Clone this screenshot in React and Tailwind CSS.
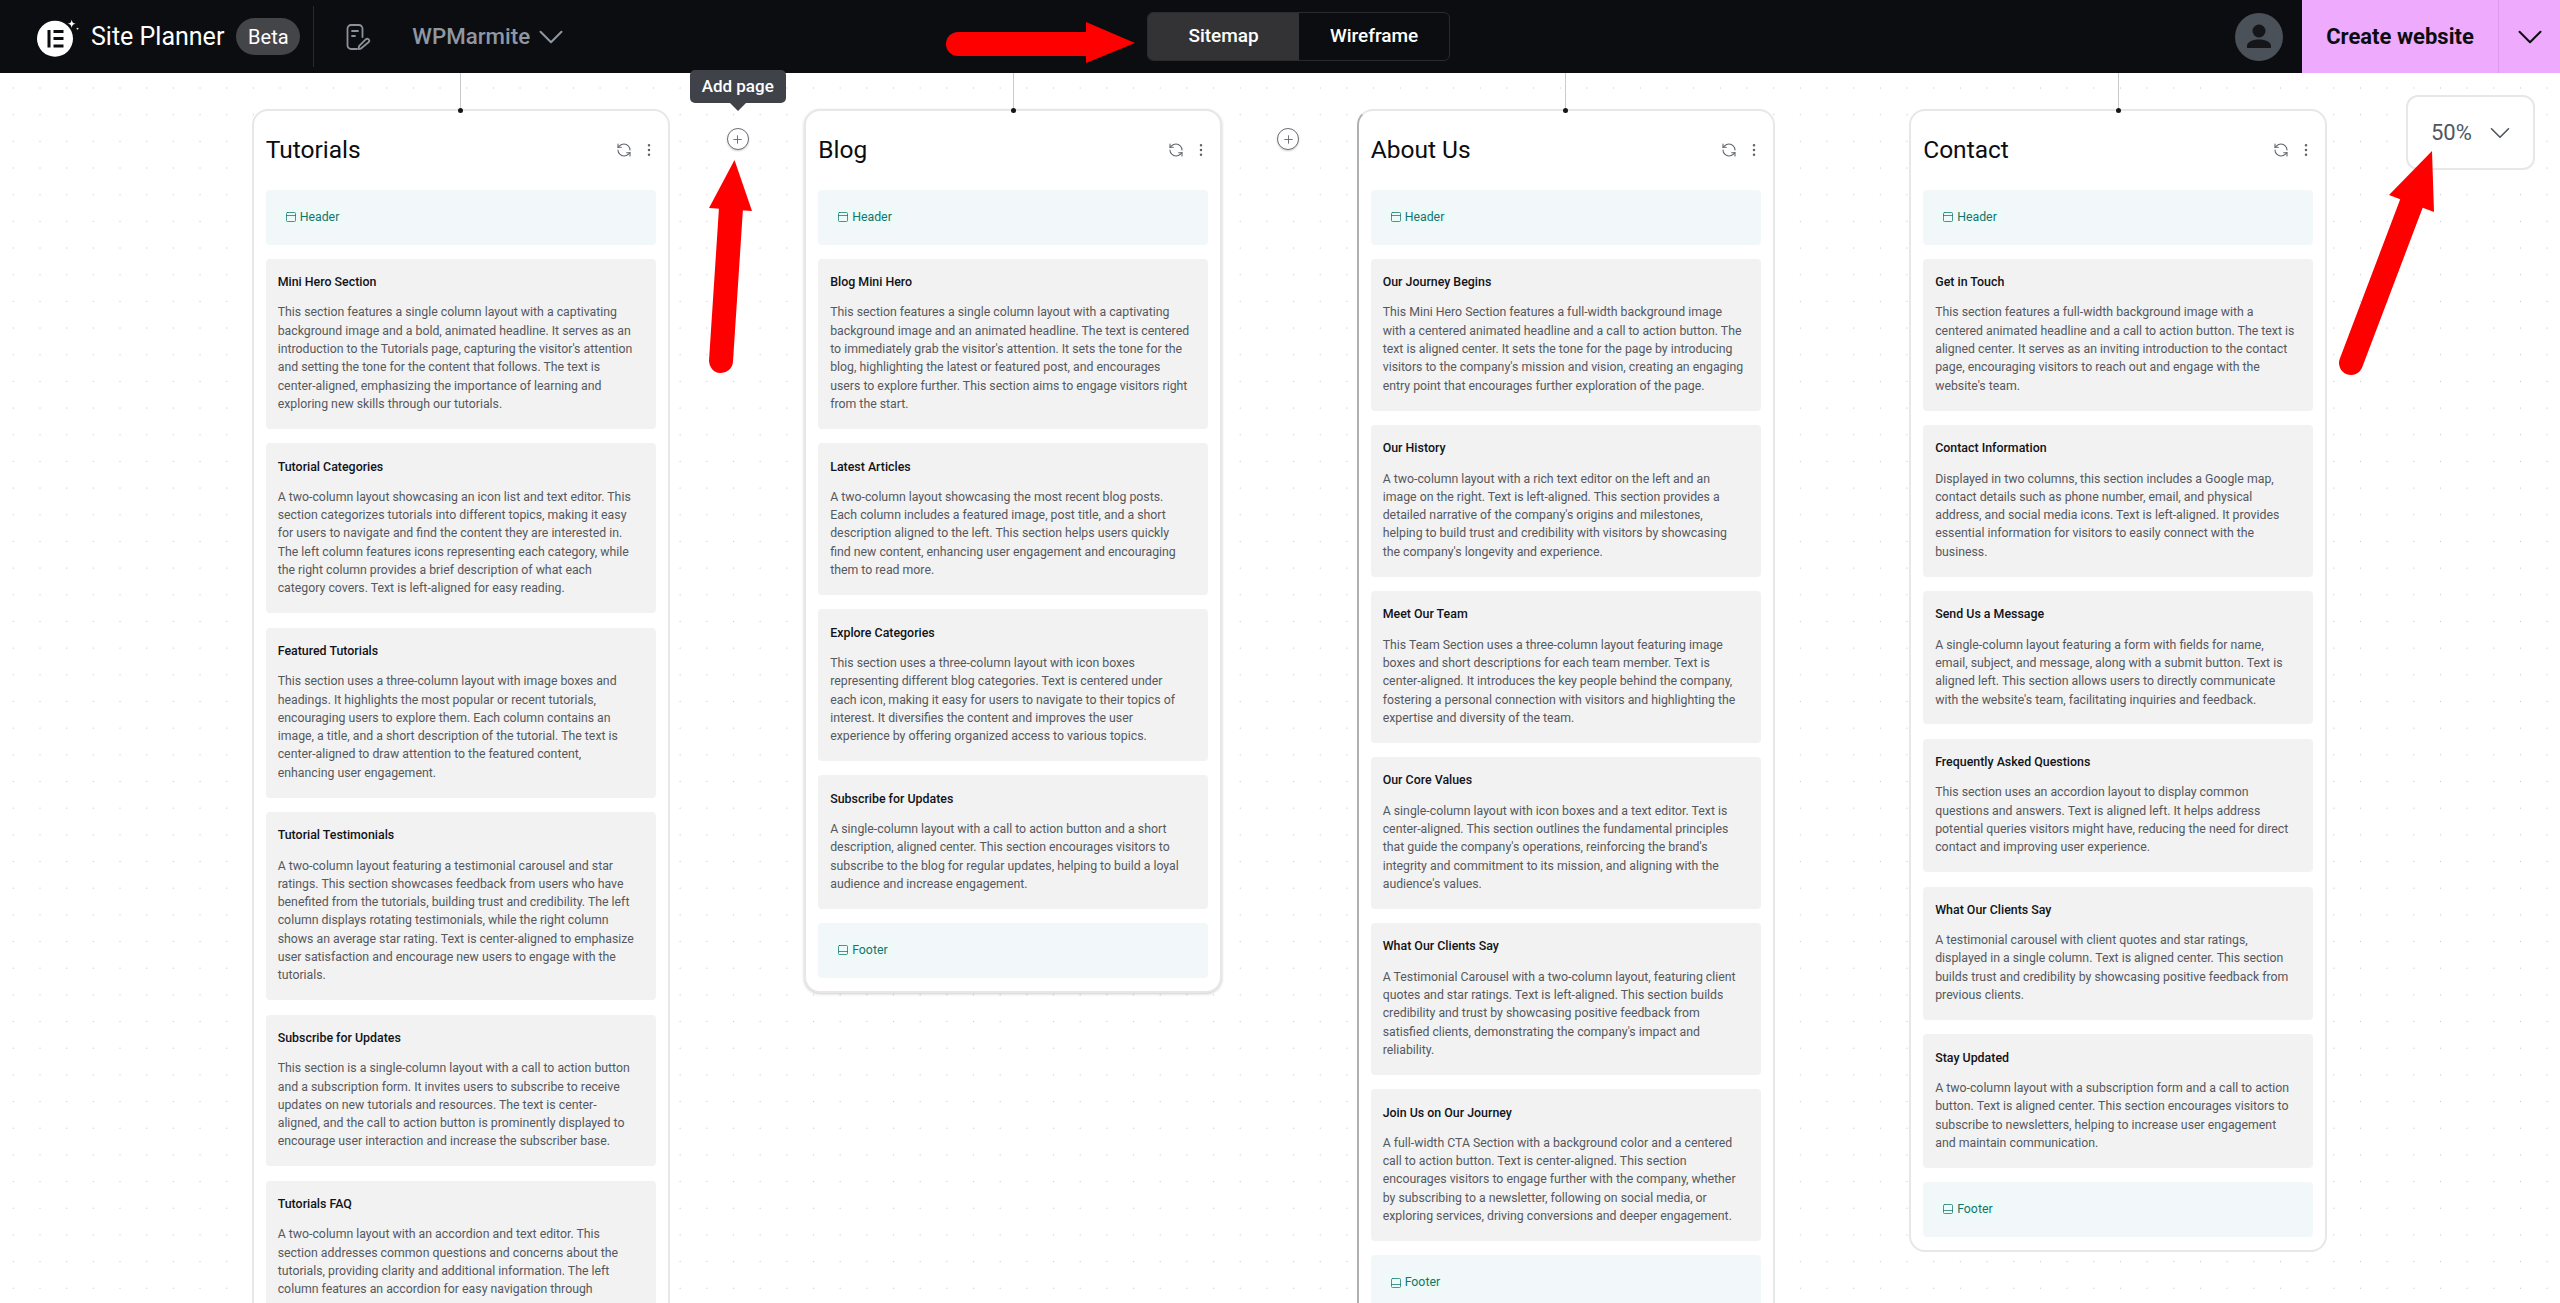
import React from "react";
import { ChevronDown, EllipsisVertical, PanelBottom, PanelTop, Plus, RefreshCcw } from "lucide-react";

const pages = [
  {
    title: "Tutorials",
    footer: false,
    sections: [
      ["Mini Hero Section", "This section features a single column layout with a captivating background image and a bold, animated headline. It serves as an introduction to the Tutorials page, capturing the visitor's attention and setting the tone for the content that follows. The text is center-aligned, emphasizing the importance of learning and exploring new skills through our tutorials."],
      ["Tutorial Categories", "A two-column layout showcasing an icon list and text editor. This section categorizes tutorials into different topics, making it easy for users to navigate and find the content they are interested in. The left column features icons representing each category, while the right column provides a brief description of what each category covers. Text is left-aligned for easy reading."],
      ["Featured Tutorials", "This section uses a three-column layout with image boxes and headings. It highlights the most popular or recent tutorials, encouraging users to explore them. Each column contains an image, a title, and a short description of the tutorial. The text is center-aligned to draw attention to the featured content, enhancing user engagement."],
      ["Tutorial Testimonials", "A two-column layout featuring a testimonial carousel and star ratings. This section showcases feedback from users who have benefited from the tutorials, building trust and credibility. The left column displays rotating testimonials, while the right column shows an average star rating. Text is center-aligned to emphasize user satisfaction and encourage new users to engage with the tutorials."],
      ["Subscribe for Updates", "This section is a single-column layout with a call to action button and a subscription form. It invites users to subscribe to receive updates on new tutorials and resources. The text is center-aligned, and the call to action button is prominently displayed to encourage user interaction and increase the subscriber base."],
      ["Tutorials FAQ", "A two-column layout with an accordion and text editor. This section addresses common questions and concerns about the tutorials, providing clarity and additional information. The left column features an accordion for easy navigation through"],
    ],
  },
  {
    title: "Blog",
    footer: true,
    sections: [
      ["Blog Mini Hero", "This section features a single column layout with a captivating background image and an animated headline. The text is centered to immediately grab the visitor's attention. It sets the tone for the blog, highlighting the latest or featured post, and encourages users to explore further. This section aims to engage visitors right from the start."],
      ["Latest Articles", "A two-column layout showcasing the most recent blog posts. Each column includes a featured image, post title, and a short description aligned to the left. This section helps users quickly find new content, enhancing user engagement and encouraging them to read more."],
      ["Explore Categories", "This section uses a three-column layout with icon boxes representing different blog categories. Text is centered under each icon, making it easy for users to navigate to their topics of interest. It diversifies the content and improves the user experience by offering organized access to various topics."],
      ["Subscribe for Updates", "A single-column layout with a call to action button and a short description, aligned center. This section encourages visitors to subscribe to the blog for regular updates, helping to build a loyal audience and increase engagement."],
    ],
  },
  {
    title: "About Us",
    footer: true,
    sections: [
      ["Our Journey Begins", "This Mini Hero Section features a full-width background image with a centered animated headline and a call to action button. The text is aligned center. It sets the tone for the page by introducing visitors to the company's mission and vision, creating an engaging entry point that encourages further exploration of the page."],
      ["Our History", "A two-column layout with a rich text editor on the left and an image on the right. Text is left-aligned. This section provides a detailed narrative of the company's origins and milestones, helping to build trust and credibility with visitors by showcasing the company's longevity and experience."],
      ["Meet Our Team", "This Team Section uses a three-column layout featuring image boxes and short descriptions for each team member. Text is center-aligned. It introduces the key people behind the company, fostering a personal connection with visitors and highlighting the expertise and diversity of the team."],
      ["Our Core Values", "A single-column layout with icon boxes and a text editor. Text is center-aligned. This section outlines the fundamental principles that guide the company's operations, reinforcing the brand's integrity and commitment to its mission, and aligning with the audience's values."],
      ["What Our Clients Say", "A Testimonial Carousel with a two-column layout, featuring client quotes and star ratings. Text is left-aligned. This section builds credibility and trust by showcasing positive feedback from satisfied clients, demonstrating the company's impact and reliability."],
      ["Join Us on Our Journey", "A full-width CTA Section with a background color and a centered call to action button. Text is center-aligned. This section encourages visitors to engage further with the company, whether by subscribing to a newsletter, following on social media, or exploring services, driving conversions and deeper engagement."],
    ],
  },
  {
    title: "Contact",
    footer: true,
    sections: [
      ["Get in Touch", "This section features a full-width background image with a centered animated headline and a call to action button. The text is aligned center. It serves as an inviting introduction to the contact page, encouraging visitors to reach out and engage with the website's team."],
      ["Contact Information", "Displayed in two columns, this section includes a Google map, contact details such as phone number, email, and physical address, and social media icons. Text is left-aligned. It provides essential information for visitors to easily connect with the business."],
      ["Send Us a Message", "A single-column layout featuring a form with fields for name, email, subject, and message, along with a submit button. Text is aligned left. This section allows users to directly communicate with the website's team, facilitating inquiries and feedback."],
      ["Frequently Asked Questions", "This section uses an accordion layout to display common questions and answers. Text is aligned left. It helps address potential queries visitors might have, reducing the need for direct contact and improving user experience."],
      ["What Our Clients Say", "A testimonial carousel with client quotes and star ratings, displayed in a single column. Text is aligned center. This section builds trust and credibility by showcasing positive feedback from previous clients."],
      ["Stay Updated", "A two-column layout with a subscription form and a call to action button. Text is aligned center. This section encourages visitors to subscribe to newsletters, helping to increase user engagement and maintain communication."],
    ],
  },
];

const ElementorLogo = () => (
  <svg width="46" height="46" viewBox="0 0 46 46" className="shrink-0">
    <circle cx="18" cy="24.7" r="18" fill="#fff" />
    <rect x="10.5" y="16" width="3" height="17.5" fill="#0c0d10" />
    <rect x="16.5" y="16" width="10" height="3" fill="#0c0d10" />
    <rect x="16.5" y="23" width="10" height="3" fill="#0c0d10" />
    <rect x="16.5" y="30.5" width="10" height="3" fill="#0c0d10" />
    <path d="M34.7 5.5c.5 3 1.2 3.700 4 4.300-2.800.6-3.500 1.300-4 4.200-.5-2.900-1.200-3.600-4-4.200 2.800-.6 3.500-1.300 4-4.300z" fill="#fff" />
    <path d="M40.500 13.200c.2 1 .5 1.300 1.500 1.500-1 .2-1.300.5-1.500 1.500-.2-1-.5-1.300-1.500-1.500 1-.2 1.300-.5 1.500-1.500z" fill="#fff" />
  </svg>
);

const PlanIcon = () => (
  <svg width="26" height="26" viewBox="0 0 26 26" fill="none" stroke="#8b929b" strokeWidth="1.8" strokeLinecap="round" strokeLinejoin="round" className="shrink-0">
    <path d="M11 25H5a3.500 3.500 0 0 1-3.500-3.500v-17A3.500 3.500 0 0 1 5 1h8a3.500 3.500 0 0 1 3.500 3.500V13" />
    <path d="M6 7h6M6 12h3" />
    <path d="M15 24.500l-2.500.5.500-2.800 7-7a2 2 0 0 1 2.800 2.800z" />
  </svg>
);

const AvatarIcon = () => (
  <svg width="48" height="48" viewBox="0 0 48 48" className="shrink-0">
    <circle cx="24" cy="24" r="24" fill="#4b5158" />
    <circle cx="24" cy="18" r="6.500" fill="#14161a" />
    <path d="M12 35v-2c0-4 5.500-6.500 12-6.500S36 29 36 33v2z" fill="#14161a" />
  </svg>
);

const Tag = ({ kind }) => {
  const Icon = kind === "Header" ? PanelTop : PanelBottom;
  return (
    <div className="flex items-center h-[54.6px] px-3 rounded-[4px] bg-[#f2f8fa]">
      <span className="flex items-center gap-[3px] h-[18px] px-[7px] rounded-full bg-[#eefaf8] text-[12.3px] text-[#0f766e]">
        <Icon size={12} strokeWidth={1.5} />
        {kind}
      </span>
    </div>
  );
};

const Section = ({ title, text }) => (
  <div className="rounded-[4px] bg-[#f2f2f2] pl-3 pr-[17px] pt-[15.3px] pb-[15.7px]">
    <h3 className="text-[12.4px] leading-[16.3px] font-medium text-[#111318] mb-[13px]">{title}</h3>
    <p className="text-[12.3px] leading-[18.3px] text-[#55585d]">{text}</p>
  </div>
);

const PageCard = ({ page }) => (
  <div className="flex flex-col items-center w-[418px] shrink-0">
    <div className="w-px h-[36px] bg-[#c9cacc]" />
    <div className={`relative w-full rounded-[16px] bg-white border-[#e7e7e7] border-2 px-[12px] pt-[25px] pb-[13px] ${page.title === "About Us" ? "border-l-[#b0b0b0]" : ""} ${page.title === "Blog" ? "shadow-[0_1px_3px_rgba(0,0,0,0.2)]" : ""}`}>
      <span className="absolute -top-[3px] left-1/2 -ml-[2.500px] w-[5px] h-[5px] rounded-full bg-[#14161a]" />
      <div className="flex items-center justify-between h-[28px] mb-[26px]">
        <h2 className="text-[24.5px] leading-[28px] text-[#0c0d10]">{page.title}</h2>
        <div className="flex items-center gap-[12px] pr-[2px] text-[#5f646b]">
          <RefreshCcw size={16} strokeWidth={1.6} />
          <EllipsisVertical size={16} strokeWidth={1.8} className="-mx-[3px]" />
        </div>
      </div>
      <div className="flex flex-col gap-[14.3px]">
        <Tag kind="Header" />
        {page.sections.map(([title, text]) => (
          <Section key={title} title={title} text={text} />
        ))}
        {page.footer && <Tag kind="Footer" />}
      </div>
    </div>
  </div>
);

const AddPage = ({ tooltip }) => (
  <div className={`relative flex justify-center w-[134.500px] shrink-0 pt-[55px] ${tooltip ? "pl-[2px]" : "pr-[2px]"}`}>
    <button className="flex items-center justify-center w-[22px] h-[22px] rounded-full bg-white border-[1.5px] border-[#6b6f75] text-[#5b6067] shadow-[0_1px_2px_rgba(0,0,0,0.2)]">
      <Plus size={13} strokeWidth={1.6} />
    </button>
    {tooltip && (
      <div className="absolute top-[-3px] left-[68px] -translate-x-1/2 flex flex-col items-center">
        <div className="flex items-center justify-center w-[96px] h-[33px] rounded-[5px] bg-[#3f4349] text-[17px] font-medium text-white whitespace-nowrap">
          Add page
        </div>
        <div className="w-0 h-0 border-x-[8px] border-x-transparent border-t-[8px] border-t-[#3f4349]" />
      </div>
    )}
  </div>
);

const Arrows = () => (
  <svg className="absolute inset-0 pointer-events-none" width="2560" height="1303" viewBox="0 0 2560 1303" fill="#ff0000">
    <g stroke="#ff0000" strokeWidth="24" strokeLinecap="round" fill="none">
      <path d="M958 44H1090" />
      <path d="M721 361L731 208" />
      <path d="M2351 363L2412 202" />
    </g>
    <path d="M1086 22L1135 43L1086 63z" />
    <path d="M734.500 160L752 211L709 208z" />
    <path d="M2432 151L2434 212L2389 195z" />
  </svg>
);

export default function App() {
  return (
    <div className="relative h-[1303px] overflow-hidden bg-white font-['Roboto',sans-serif]">
      <header className="flex items-center h-[73px] bg-[#0c0d10]">
        <div className="flex items-center pl-[37px] h-full">
          <ElementorLogo />
          <span className="ml-[8px] text-[25px] text-white whitespace-nowrap">Site Planner</span>
          <span className="flex items-center justify-center ml-[12px] w-[64px] h-[37px] rounded-full bg-[#444548] text-[20px] text-white">Beta</span>
          <div className="ml-[13px] w-px h-[61px] bg-[#2a2b2e]" />
          <div className="ml-[32px]"><PlanIcon /></div>
          <span className="ml-[40px] text-[22.3px] font-medium text-[#8f98a2] whitespace-nowrap">WPMarmite</span>
          <ChevronDown size={42} strokeWidth={1.15} className="text-[#8f98a2]" />
        </div>
        <div className="flex ml-[575px] w-[303px] h-[49px] rounded-[6px] border border-[#2a2b2e] overflow-hidden text-[19px] font-medium text-white">
          <div className="flex items-center justify-center w-[151px] bg-[#333335]">Sitemap</div>
          <div className="flex items-center justify-center flex-1">Wireframe</div>
        </div>
        <div className="flex items-center ml-auto h-full">
          <AvatarIcon />
          <div className="flex h-full ml-[19px] bg-[#eeaafc] text-[#0c0d10]">
            <div className="flex items-center justify-center w-[196px] text-[22px] font-bold whitespace-nowrap">Create website</div>
            <div className="flex items-center justify-center w-[62px] border-l border-[#dd9aeb]">
              <ChevronDown size={42} strokeWidth={1.15} />
            </div>
          </div>
        </div>
      </header>

      <main className="h-[1230px] bg-[radial-gradient(circle,#c6c8cb_0.8px,transparent_1px)] bg-[length:26.68px_26.68px] bg-[position:0px_1.700px]">
        <div className="flex items-start pl-[251.700px]">
          <PageCard page={pages[0]} />
          <AddPage tooltip />
          <PageCard page={pages[1]} />
          <AddPage />
          <PageCard page={pages[2]} />
          <div className="w-[134.500px] shrink-0" />
          <PageCard page={pages[3]} />
        </div>
      </main>

      <div className="absolute top-[95px] left-[2406px] flex items-center pl-[23px] w-[129px] h-[75px] rounded-[12px] bg-white border-2 border-[#e7e7e7] text-[22px] text-[#4f5660]">
        50%
        <ChevronDown size={34} strokeWidth={1.15} className="ml-[11px]" />
      </div>

      <Arrows />
    </div>
  );
}
